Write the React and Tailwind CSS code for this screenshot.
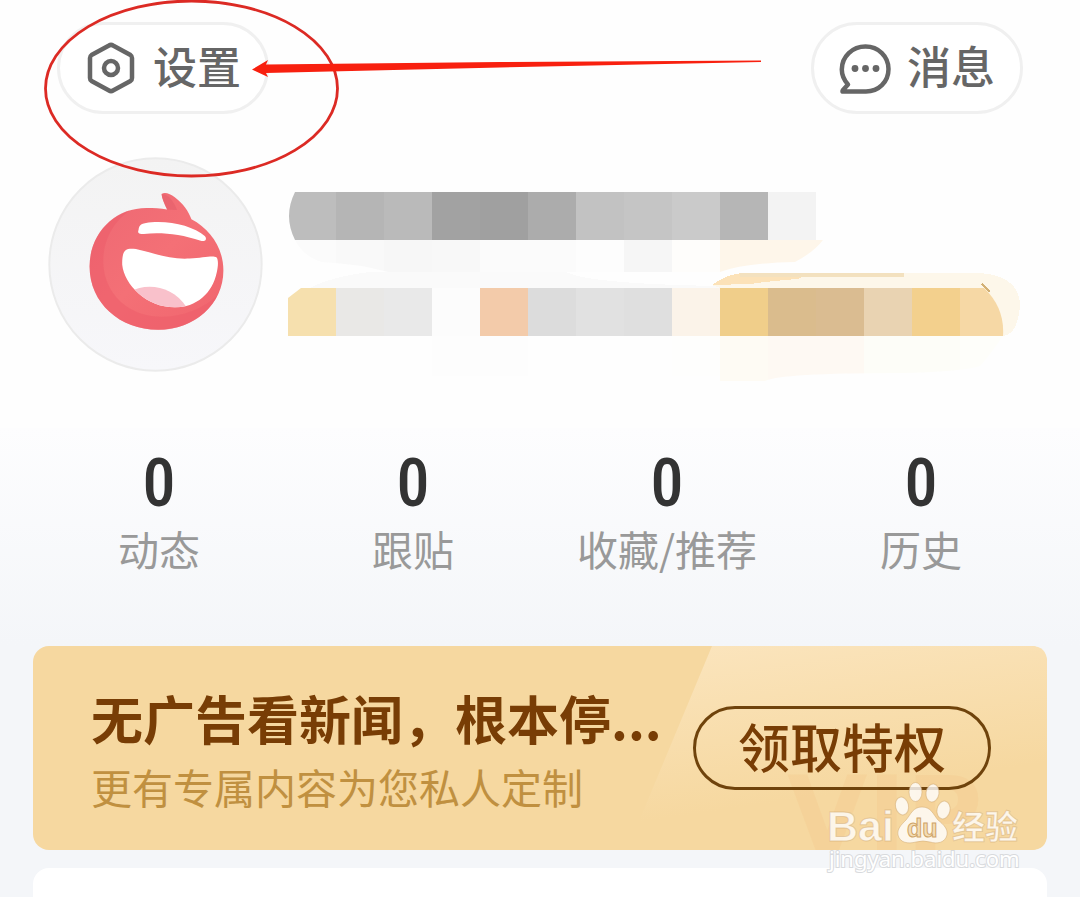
import { useState } from "react";

const stats = [
  { id: "posts", label: "动态", count: 0 },
  { id: "replies", label: "跟贴", count: 0 },
  { id: "favorites", label: "收藏/推荐", count: 0 },
  { id: "history", label: "历史", count: 0 },
];

// 48px mosaic tiles, one list per row
const nameTiles = ["#bdbdbd", "#b5b5b5", "#bababa", "#a2a2a2", "#a0a0a0", "#acacac", "#c2c2c2", "#c5c5c5", "#cacaca", "#b6b6b6", "#f3f3f3"];
const nameShade = ["#fbfbfb", "#f9f9f9", "#f7f7f7", "#f8f8f8", "#fbfbfb", "#fbfbfb", "#fdfdfd", "#f6f6f6", "#fefdfb", "#fef6ea", "#fef6ea"];
const tagTiles = ["#f6e0ae", "#e9e8e6", "#e9e9e9", "#fcfcfc", "#f3cbaa", "#dcdcdc", "#e1e1e1", "#dfdfdf", "#fbf3e9", "#f0ce8a", "#dabc8d", "#dabc91", "#e9d3b2", "#f3d08d", "#f6d8a5"];
const tagShade = ["#fefefe", "#fefefe", "#fefefe", "#fdfdfd", "#fdfdfd", "#fefefe", "#fefefe", "#fefefe", "#fefefd", "#fefbf4", "#fef9f3", "#fef9f3", "#fdfdf8", "#fdfdf8", "#fefefa"];

function SettingsIcon() {
  return (
    <svg viewBox="-2 0 52 52" className="w-[52px] h-[52px]" fill="none" stroke="#666666" strokeWidth="4.5" strokeLinejoin="round">
      <path d="M22 3.500Q24 2.300 26 3.500L43.500 13Q45 14 45 16V36Q45 38 43.500 39L26 48.500Q24 49.700 22 48.500L4.500 39Q3 38 3 36V16Q3 14 4.500 13Z" />
      <circle cx="24" cy="26" r="7" />
    </svg>
  );
}

function MessageIcon() {
  return (
    <svg viewBox="0 0 52 52" className="w-[52px] h-[52px]" fill="none" stroke="#666666" strokeWidth="4.500" strokeLinejoin="round">
      <path d="M27 49.500H4Q3 49.500 4 48L9 42.500C5 38 2.800 33 2.800 27.500C2.800 14.500 13.500 4.500 26.500 4.500C39.500 4.500 49.500 14.500 49.500 27C49.500 40 39.500 49.500 27 49.500Z" />
      <g fill="#666666" stroke="none">
        <circle cx="16" cy="26.500" r="3.400" />
        <circle cx="26.500" cy="26.500" r="3.400" />
        <circle cx="37" cy="26.500" r="3.400" />
      </g>
    </svg>
  );
}

function Avatar() {
  return (
    <svg viewBox="24 21 646 646" className="w-[215px] h-[215px] shrink-0" role="img" aria-label="头像">
      <defs>
        <linearGradient id="face" x1="0" y1="0" x2="1" y2="1">
          <stop offset="0" stopColor="#ed6873" />
          <stop offset="0.5" stopColor="#f47076" />
          <stop offset="1" stopColor="#f0656e" />
        </linearGradient>
        <linearGradient id="avatarBg" x1="0" y1="0" x2="0" y2="1">
          <stop offset="0" stopColor="#f3f3f3" />
          <stop offset="1" stopColor="#f7f7fa" />
        </linearGradient>
        <clipPath id="mouth">
          <path d="M247 345C246 305 255 293 285 297C340 309 390 330 450 326C490 323 520 316 530 322C537 330 535 350 531 368C518 430 470 473 405 473C320 473 253 405 247 345Z" />
        </clipPath>
      </defs>
      <circle cx="347" cy="344" r="319" fill="url(#avatarBg)" stroke="#ebebeb" strokeWidth="6" />
      <path
        d="M149 350C149 250 225 174 320 174C342 174 362 175 382 179C374 162 366 145 365 132C376 125 391 132 405 142C430 161 446 183 455 208C511 237 551 294 551 362C551 463 465 540 355 540C240 540 149 460 149 350Z"
        fill="url(#face)"
      />
      <path
        d="M149 350C149 268 200 202 270 181C215 220 188 278 190 340C194 436 270 501 365 501C430 501 490 476 533 437C501 500 435 540 355 540C240 540 149 460 149 350Z"
        fill="#ec5d69"
        opacity="0.55"
      />
      <path d="M366 133C381 130 400 150 412 180L382 179C374 162 366 145 366 133Z" fill="#e45f6b" opacity="0.6" />
      <path d="M296 240C297 222 310 219 335 217C395 212 463 230 495 258C504 269 495 276 483 273C422 252 365 247 312 252C298 253 292 249 296 240Z" fill="#fff" />
      <g clipPath="url(#mouth)">
        <rect x="240" y="280" width="310" height="200" fill="#fff" />
        <path d="M270 425C325 397 400 410 440 472L400 500H280Z" fill="#f9c1cb" />
      </g>
    </svg>
  );
}

function Tiles({ colors, y, height }) {
  return colors.map((fill, i) => (
    <rect key={i} x={288 + i * 48} y={y} width="48" height={height} fill={fill} />
  ));
}

function ProfileMosaic() {
  return (
    <svg viewBox="279 180 760 170" className="w-full max-w-[760px]" shapeRendering="crispEdges" overflow="visible" aria-hidden="true">
      <defs>
        <clipPath id="nameClip">
          <path d="M295 192Q283 216 295 240H816V192Z" />
        </clipPath>
        <clipPath id="nameShadeClip">
          <path d="M295 240Q304 257 322 262Q360 264 388 272H720Q745 263 795 262Q814 252 823 240Z" />
        </clipPath>
        <clipPath id="tagClip">
          <path d="M288 298L301 288H984Q1005 308 1003 336H288Z" />
        </clipPath>
        <clipPath id="tagShadeClip">
          <path d="M288 336H1003Q990 355 980 366Q960 372 900 373Q780 373 765 381H720V376H360L288 368Z" />
        </clipPath>
      </defs>
      <g clipPath="url(#nameShadeClip)">
        <Tiles colors={nameShade} y={240} height={32} />
        <rect x="816" y="240" width="10" height="32" fill="#fef6ea" />
      </g>
      <g clipPath="url(#nameClip)">
        <Tiles colors={nameTiles} y={192} height={48} />
      </g>
      <path d="M310 288Q330 277 370 272H566Q590 284 720 286V288Z" fill="#fafafa" />
      <path d="M712 285Q728 273 745 273H980Q1019 276 1020 305Q1018 334 1003 336L984 288H720Z" fill="#fdf7ea" />
      <path d="M712 285Q728 273 745 273H810L798 279Q770 281 750 284Z" fill="#fce2b8" />
      <rect x="740" y="273" width="164" height="4" fill="#f3e1bf" />
      <g clipPath="url(#tagClip)">
        <Tiles colors={tagTiles} y={288} height={48} />
      </g>
      <path d="M982 284L990 292" stroke="#d3b176" strokeWidth="1.500" />
      <g clipPath="url(#tagShadeClip)">
        <Tiles colors={tagShade} y={336} height={45} />
      </g>
    </svg>
  );
}

function Annotation() {
  return (
    <svg viewBox="0 0 780 190" className="absolute left-0 top-0 w-[780px] h-[190px] pointer-events-none" aria-hidden="true">
      <ellipse cx="191.500" cy="88.500" rx="146" ry="87.500" fill="none" stroke="#dc2a24" strokeWidth="2.800" />
      <path d="M252 69.500L268 60L266 64.500L500 62L761 60.500V62L500 67.500L266 73L268 77Z" fill="#f8200f" />
    </svg>
  );
}

function Watermark() {
  return (
    <svg viewBox="0 0 204 106" className="absolute right-[50px] top-[776px] w-[204px] h-[106px] pointer-events-none" aria-hidden="true">
      <g fill="#fff" fillOpacity="0.8" stroke="#d0a870" strokeOpacity="0.5" strokeWidth="1">
        <text x="1" y="65" fontSize="43" fontWeight="700" fontFamily="Liberation Sans, sans-serif">Bai</text>
        <ellipse cx="89.500" cy="16" rx="6.500" ry="9.500" />
        <ellipse cx="106.500" cy="17" rx="6.500" ry="9" transform="rotate(8 106.500 17)" />
        <ellipse cx="76" cy="30" rx="6.500" ry="9" transform="rotate(-12 76 30)" />
        <ellipse cx="117.500" cy="34" rx="6.500" ry="9" transform="rotate(12 117.500 34)" />
        <path d="M96 31C105 31 107 38 112 44C118 49 122 53 121 59C119 67 111 68 104 66Q97 64 90 66C82 68 74 67 72 59C71 53 75 49 80 44C85 38 87 31 96 31Z" />
        <text x="126" y="63" fontSize="33" fontWeight="700" fontFamily="Noto Sans CJK SC, sans-serif">经验</text>
      </g>
      <text x="81" y="61" fontSize="25" fontWeight="700" fill="#f3dcb4" stroke="#cfa468" strokeWidth="1" fontFamily="Liberation Sans, sans-serif">du</text>
      <text x="3" y="91" fontSize="22" fill="#fff" stroke="#d8dadd" strokeWidth="2" paintOrder="stroke" fontFamily="Noto Sans, sans-serif">jingyan.baidu.com</text>
    </svg>
  );
}

function PillButton({ icon, children }) {
  return (
    <button
      type="button"
      className="flex items-center justify-center gap-4 w-[212px] h-[92px] rounded-full border-3 border-[#f0f0f0] bg-white text-[44px] leading-none font-medium text-[#666666]"
    >
      {icon}
      <span className="pb-1.5">{children}</span>
    </button>
  );
}

export default function App() {
  const [claimed, setClaimed] = useState(false);

  return (
    <div className="relative flex flex-col min-h-screen overflow-hidden bg-[#f4f6f9] font-['Noto_Sans_CJK_SC',sans-serif]">
      <div className="bg-[#fefefe] pb-14">
        {/* Top buttons */}
        <header className="flex items-center justify-between pt-[22px] pl-[57px] pr-[57px]">
          <PillButton icon={<SettingsIcon />}>设置</PillButton>
          <PillButton icon={<MessageIcon />}>消息</PillButton>
        </header>

        {/* Profile */}
        <section className="flex items-center gap-4 mt-[43px] pl-12 pr-10">
          <Avatar />
          <ProfileMosaic />
        </section>
      </div>

      {/* Stats */}
      <section className="grid grid-cols-4 px-8 pt-6 pb-[72px] bg-linear-to-b from-[#fdfdfe] to-[#f4f6f9]">
        {stats.map((item) => (
          <a key={item.id} href={`#${item.id}`} className="flex flex-col items-center">
            <span className="font-['Liberation_Sans_Narrow','Roboto_Condensed','DejaVu_Sans_Condensed',sans-serif] font-medium text-[66px] leading-[64px] text-[#333333]">
              {item.count}
            </span>
            <span className="mt-1.5 text-[41px] leading-[52px] whitespace-nowrap text-[#999999]">{item.label}</span>
          </a>
        ))}
      </section>

      {/* VIP banner */}
      <section className="relative flex items-center justify-between mx-[33px] h-[204px] pl-[58px] pr-14 rounded-2xl bg-[#f6d8a0]">
        <svg viewBox="0 0 420 204" className="absolute right-0 top-0 w-[420px] h-[204px]" overflow="visible" aria-hidden="true">
          <defs>
            <linearGradient id="shine" x1="0" y1="0" x2="0.300" y2="1">
              <stop offset="0" stopColor="#fbe5be" />
              <stop offset="0.800" stopColor="#f6d8a0" />
            </linearGradient>
          </defs>
          <path d="M85 0H404Q420 0 420 16V188Q420 204 404 204H0Z" fill="url(#shine)" />
          <text x="160" y="204" fontSize="104" fontWeight="700" fill="#f4c98c" fillOpacity="0.350" fontFamily="DejaVu Sans, sans-serif">VIP</text>
        </svg>
        <div className="relative min-w-0">
          <h2 className="text-[52px] leading-[76px] font-bold whitespace-nowrap text-[#783d05]">无广告看新闻，根本停...</h2>
          <p className="text-[41px] leading-[60px] whitespace-nowrap text-[#c09040]">更有专属内容为您私人定制</p>
        </div>
        <button
          type="button"
          onClick={() => setClaimed(!claimed)}
          aria-pressed={claimed}
          className="relative shrink-0 w-[298px] h-[84px] pb-1 rounded-full border-3 border-[#6f430c] text-[52px] leading-none font-medium text-[#783d05]"
        >
          领取特权
        </button>
      </section>

      <section className="flex-1 mt-[18px] mx-[33px] rounded-t-2xl bg-white" />

      <Annotation />
      <Watermark />
    </div>
  );
}
